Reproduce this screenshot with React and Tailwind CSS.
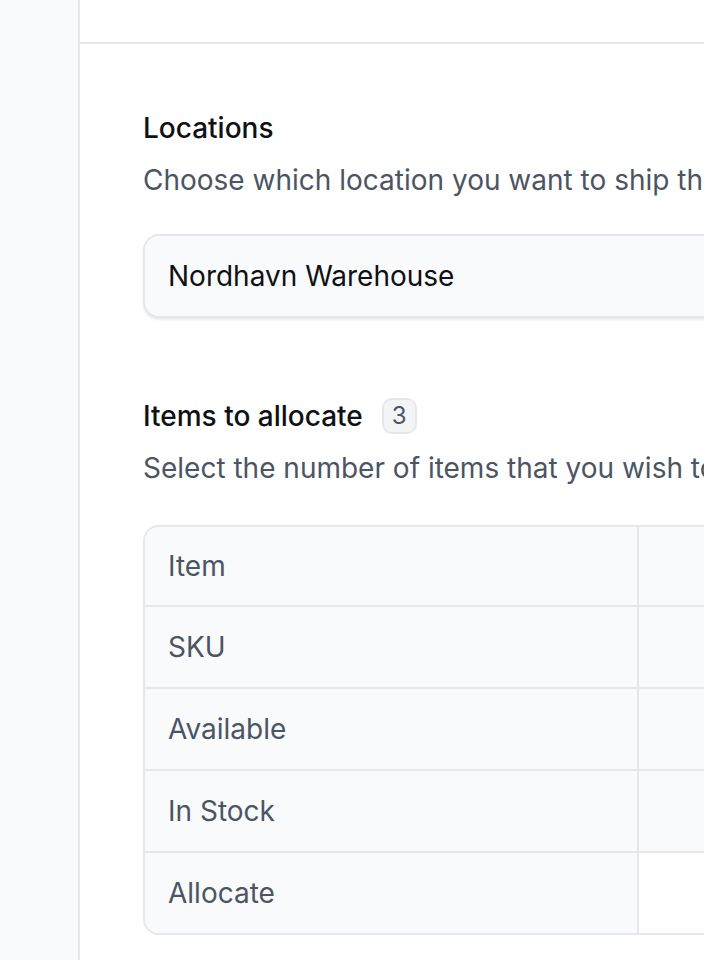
import React from 'react';

const rows = [
  { label: 'Item', shaded: true, h: 'h-[80px] border-b-2' },
  { label: 'SKU', shaded: true, h: 'h-[82px] border-b-2' },
  { label: 'Available', shaded: true, h: 'h-[82px] border-b-2' },
  { label: 'In Stock', shaded: true, h: 'h-[82px] border-b-2' },
  { label: 'Allocate', shaded: false, h: 'h-[80px]' },
];

const App = () => {
  return (
    <div
      className="flex min-h-[960px] w-[704px] overflow-hidden bg-white"
      style={{ fontFamily: 'Inter, "Noto Sans", sans-serif' }}
    >
      {/* Sidebar */}
      <div className="w-[80px] shrink-0 border-r-2 border-[#e5e7eb] bg-[#f9fafb]" />

      {/* Main */}
      <div className="flex min-w-0 flex-1 flex-col">
        <div className="h-[44px] shrink-0 border-b-2 border-[#e5e7eb]" />

        <div className="min-w-[700px] pl-[63px] pt-[64px]">
          {/* Locations */}
          <h2 className="text-[28px] font-medium leading-[40px] text-[#0f1115]">Locations</h2>
          <p className="mt-[12px] whitespace-nowrap text-[28px] leading-[40px] text-[#4b5563]">
            Choose which location you want to ship the items from.
          </p>
          <div className="mt-[34px] flex h-[84px] w-[900px] items-center rounded-l-[16px] border-2 border-r-0 border-[#e5e7eb] bg-[#f9fafb] pl-[23px] shadow-[0_2px_2px_rgba(0,0,0,0.08)]">
            <span className="text-[28px] leading-[40px] text-[#0f1115]">Nordhavn Warehouse</span>
          </div>

          {/* Items to allocate */}
          <div className="mt-[78px] flex items-center gap-[19px]">
            <h2 className="text-[28px] font-medium leading-[40px] text-[#0f1115]">Items to allocate</h2>
            <span className="flex h-[36px] w-[35px] items-center justify-center rounded-[10px] border-2 border-[#e5e7eb] bg-[#f3f4f6] text-[24px] leading-none text-[#4b5563]">
              3
            </span>
          </div>
          <p className="mt-[12px] whitespace-nowrap text-[28px] leading-[40px] text-[#4b5563]">
            Select the number of items that you wish to allocate.
          </p>

          {/* Table */}
          <div className="mt-[37px] w-[900px] overflow-hidden rounded-l-[16px] border-2 border-r-0 border-[#e5e7eb]">
            {rows.map((row) => (
              <div key={row.label} className={`flex border-[#e5e7eb] ${row.h}`}>
                <div className="flex w-[494px] shrink-0 items-center border-r-2 border-[#e5e7eb] bg-[#f9fafb] pl-[23px]">
                  <span className="text-[28px] leading-[40px] text-[#4b5563]">{row.label}</span>
                </div>
                <div className={`flex-1 ${row.shaded ? 'bg-[#f9fafb]' : 'bg-white'}`} />
              </div>
            ))}
          </div>
        </div>
      </div>
    </div>
  );
};

export default App;
